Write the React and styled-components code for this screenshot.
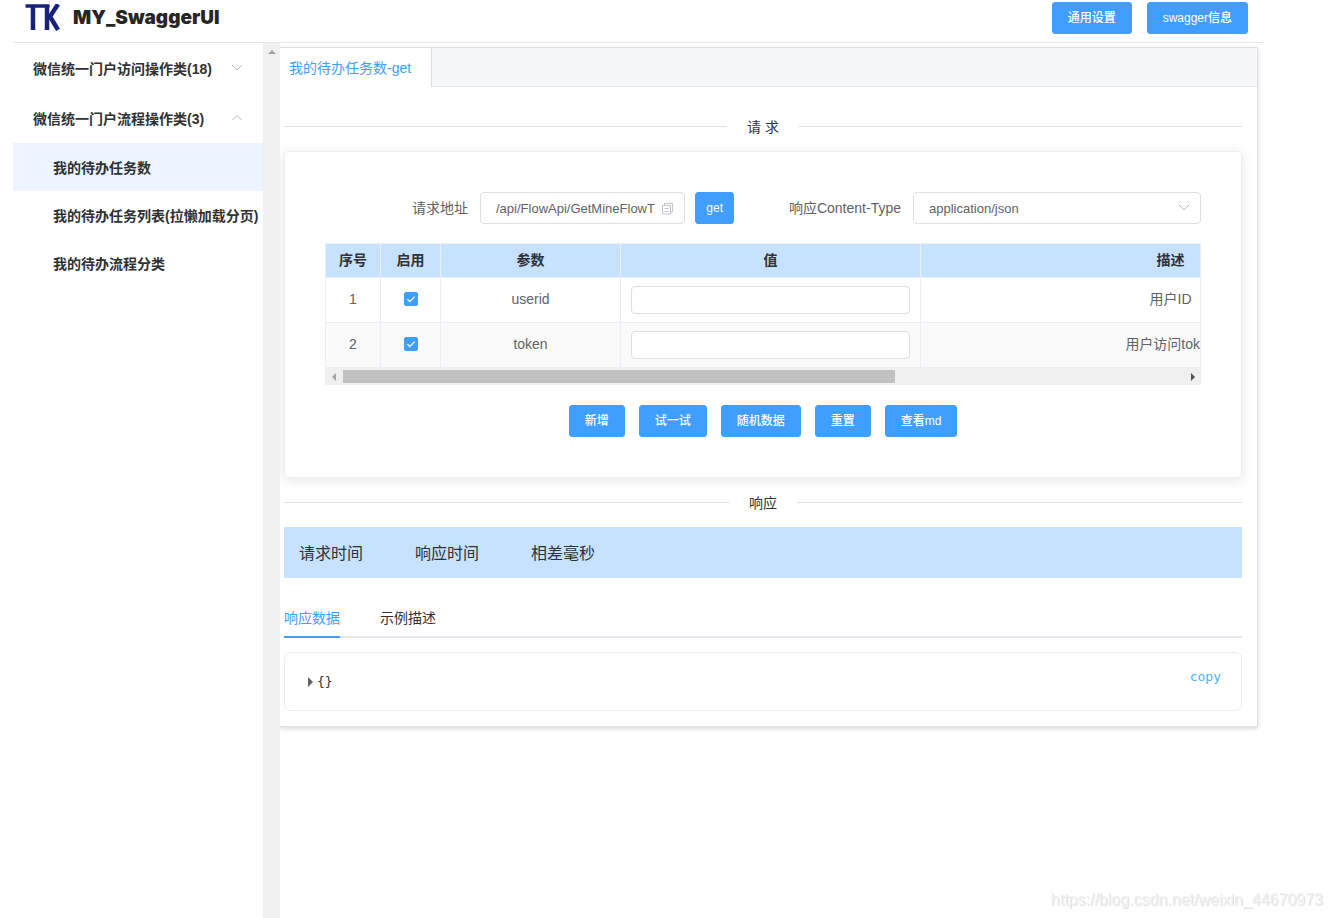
import { useState } from "react";
import styled, { createGlobalStyle, css } from "styled-components";

const GlobalStyle = createGlobalStyle`
  * {
    box-sizing: border-box;
  }

  body {
    margin: 0;
    background-color: white;
    color: #303133;
    font-family: "Liberation Sans", "Noto Sans CJK SC", sans-serif;
    font-size: 14px;
    line-height: 20px;
  }

  button, input, select {
    font-family: inherit;
  }
`;

const Page = styled.div`
  display: flex;
  flex-direction: column;
  min-height: 100vh;
  padding: 0 69px 0 13px;
`;

const Header = styled.header`
  display: flex;
  align-items: center;
  height: 43px;
  padding: 0 15px 6px 12px;
  border-bottom: 1px solid #e4e4e4;
`;

const Title = styled.h1`
  flex: 1;
  margin: 0 0 0 11px;
  color: #262626;
  font-family: Inter, sans-serif;
  font-size: 19px;
  font-weight: 900;
`;

const Button = styled.button`
  height: 32px;
  padding: 0 15px;
  border: 1px solid #409eff;
  border-radius: 3px;
  background-color: #409eff;
  color: white;
  font-size: 12px;
  font-weight: 500;
  line-height: 16px;
  white-space: nowrap;
  cursor: pointer;
`;

const HeaderButtons = styled.div`
  display: flex;
  gap: 15px;
`;

const Body = styled.div`
  display: flex;
  flex: 1;
`;

const Sidebar = styled.nav`
  width: 250px;
  flex-shrink: 0;
`;

const GroupButton = styled.button`
  display: flex;
  align-items: center;
  justify-content: space-between;
  width: 100%;
  height: 50px;
  padding: 0 20px;
  border: none;
  background: none;
  color: #303133;
  font-size: 14px;
  font-weight: 700;
  cursor: pointer;
`;

const MenuLink = styled.a`
  display: flex;
  align-items: center;
  height: 48px;
  padding: 2px 0 0 40px;
  background-color: ${({ $active }) => ($active ? "#ecf5ff" : "transparent")};
  color: #303133;
  font-weight: 700;
  text-decoration: none;
  white-space: nowrap;
`;

const SideTrack = styled.div`
  display: flex;
  justify-content: center;
  width: 17px;
  flex-shrink: 0;
  padding-top: 7px;
  background-color: #f0f0f0;
`;

const Main = styled.main`
  flex: 1;
  min-width: 0;
  padding: 4px 5px 8px 0;
  overflow: hidden;
`;

const Panel = styled.section`
  border: 1px solid #dcdfe6;
  border-left: none;
  box-shadow: 0 2px 4px rgba(0, 0, 0, 0.12), 0 0 6px rgba(0, 0, 0, 0.04);
`;

const TabStrip = styled.div`
  height: 39px;
  border-bottom: 1px solid #e4e7ed;
  background-color: #f5f7fa;
`;

const PageTab = styled.button`
  height: 39px;
  padding: 0 20px 2px 9px;
  border: none;
  border-right: 1px solid #dcdfe6;
  background-color: white;
  color: #409eff;
  font-size: 14px;
`;

const Content = styled.div`
  padding: 29px 15px 15px 4px;
`;

const Divider = styled.div`
  display: flex;
  align-items: center;
  gap: 20px;
  height: 20px;

  &::before, &::after {
    content: "";
    flex: 1;
    height: 1px;
    background-color: #dcdfe6;
  }

  span {
    padding-top: 2px;
  }
`;

const Card = styled.div`
  margin: 15px 0 14px;
  padding: 40px;
  border: 1px solid #ebeef5;
  border-radius: 4px;
  box-shadow: 0 2px 12px rgba(0, 0, 0, 0.1);
`;

const FormRow = styled.form`
  display: grid;
  grid-template-columns: 155px minmax(0, 1fr) 179px 288px;
  align-items: center;
  margin-bottom: 19px;
`;

const Label = styled.label`
  padding-right: 12px;
  color: #606266;
  text-align: right;
`;

const AddressField = styled.div`
  display: flex;
  gap: 10px;
`;

const fieldBox = css`
  border: 1px solid #dcdfe6;
  border-radius: 4px;
  background-color: white;
`;

const AddressBox = styled.div`
  ${fieldBox}
  display: flex;
  align-items: center;
  flex: 1;
  min-width: 0;
  height: 32px;
  padding: 0 10px 0 15px;
`;

const AddressInput = styled.input`
  flex: 1;
  min-width: 0;
  padding: 0;
  border: none;
  outline: none;
  color: #606266;
  font-size: 13px;
`;

const IconButton = styled.button`
  display: flex;
  margin-left: 6px;
  padding: 0;
  border: none;
  background: none;
  cursor: pointer;
`;

const MethodButton = styled(Button)`
  padding: 0 10px;
`;

const SelectBox = styled.div`
  ${fieldBox}
  display: grid;
  align-items: center;
  height: 32px;

  > * {
    grid-area: 1 / 1;
  }

  svg {
    justify-self: end;
    margin-right: 10px;
    pointer-events: none;
  }
`;

const Select = styled.select`
  width: 100%;
  height: 30px;
  padding: 0 30px 0 15px;
  border: none;
  outline: none;
  appearance: none;
  background: none;
  color: #606266;
  font-size: 13px;
`;

const TableBox = styled.div`
  border: 1px solid #ebeef5;
`;

const TableScroll = styled.div`
  overflow: hidden;
`;

const Table = styled.table`
  width: 1095px;
  border-collapse: separate;
  border-spacing: 0;
  table-layout: fixed;
  color: #606266;
  text-align: center;

  th, td {
    padding: 0 10px 2px;
    border-right: 1px solid #ebeef5;
    border-bottom: 1px solid #ebeef5;
  }

  th {
    height: 34px;
    background-color: #c6e2ff;
    color: #303133;
    font-weight: 700;
  }

  td {
    height: 45px;
  }

  tbody tr:nth-child(even) {
    background-color: #fafafa;
  }
`;

const Col = styled.col`
  width: ${({ $width }) => $width}px;
`;

const ValueCell = styled.td`
  && {
    padding-bottom: 0;
  }
`;

const CheckInput = styled.input`
  display: block;
  width: 14px;
  height: 14px;
  margin: 0 auto;
  border-radius: 2px;
  appearance: none;
  border: 1px solid #dcdfe6;
  background-color: white;

  &:checked {
    border-color: #409eff;
    background-color: #409eff;
    background-image: url("data:image/svg+xml,%3Csvg xmlns='http://www.w3.org/2000/svg' viewBox='0 0 12 12'%3E%3Cpath d='M2.4 6.2l2.4 2.4 4.8-5' fill='none' stroke='white' stroke-width='1.2'/%3E%3C/svg%3E");
  }
`;

const ValueInput = styled.input`
  ${fieldBox}
  display: block;
  width: 100%;
  height: 28px;
  padding: 0 15px;
  outline: none;
  color: #606266;
  font-size: 13px;
`;

const ScrollTrack = styled.div`
  display: flex;
  align-items: center;
  height: 16px;
  padding: 1px 5px 0 6px;
  background-color: #f0f0f0;
`;

const ScrollRail = styled.div`
  flex: 1;
  margin: 0 6px 0 7px;
`;

const ScrollThumb = styled.div`
  width: 65.5%;
  height: 13px;
  background-color: #c1c1c1;
`;

const Triangle = styled.span`
  width: 0;
  height: 0;
  border: ${({ $size = 4 }) => $size}px solid transparent;
  ${({ $dir, $color }) => ({
    up: `border-top: none; border-bottom-color: ${$color};`,
    left: `border-left: none; border-right-color: ${$color};`,
    right: `border-right: none; border-left-color: ${$color};`,
  })[$dir]}
`;

const Actions = styled.div`
  display: flex;
  justify-content: center;
  gap: 14px;
  margin-top: 20px;
`;

const TimeBar = styled.div`
  display: flex;
  gap: 52px;
  margin-top: 15px;
  padding: 15px 15px 12px;
  background-color: #c6e2ff;
  font-size: 16px;
  line-height: 24px;
`;

const ResultTabs = styled.div`
  display: flex;
  gap: 40px;
  height: 40px;
  margin-top: 20px;
  border-bottom: 2px solid #e4e7ed;
`;

const ResultTab = styled.button`
  height: 40px;
  padding: 0;
  border: none;
  border-bottom: 2px solid ${({ $active }) => ($active ? "#409eff" : "transparent")};
  background: none;
  color: ${({ $active }) => ($active ? "#409eff" : "#303133")};
  font-size: 14px;
  cursor: pointer;
`;

const JsonBox = styled.div`
  display: flex;
  justify-content: space-between;
  height: 59px;
  margin-top: 14px;
  padding: 14px 20px 14px 23px;
  border: 1px solid #eee;
  border-radius: 6px;
  font-family: "DejaVu Sans Mono", monospace;
  font-size: 13px;
`;

const JsonToggle = styled.button`
  display: flex;
  align-items: center;
  gap: 4px;
  padding: 0;
  border: none;
  background: none;
  color: #303133;
  font-size: 13px;
`;

const CopyButton = styled.button`
  align-self: flex-start;
  padding: 0;
  border: none;
  background: none;
  color: #49b3ff;
  font-size: 13px;
  line-height: 20px;
  cursor: pointer;
`;

const Watermark = styled.div`
  position: fixed;
  right: 9px;
  bottom: 8px;
  color: #f0f0f0;
  font-size: 16px;
  text-shadow: 1px 1px 1px #ddd;
`;

const Logo = () => (
  <svg width="37" height="28" viewBox="0 0 37 28" aria-label="TK" role="img">
    <g fill="none" stroke="#16227c" strokeWidth="4.500">
      <line x1="0.500" y1="2" x2="24.500" y2="2" strokeWidth="3.500" />
      <line x1="8" y1="1" x2="8" y2="26" />
      <line x1="22" y1="1" x2="22" y2="26" />
      <polyline points="33,0.200 25,12.500 33,25.800" />
    </g>
  </svg>
);

const Chevron = ({ up }) => (
  <svg width="12" height="12" viewBox="0 0 12 12" aria-hidden="true">
    <path
      d={up ? "M1.5 8L6 3.5L10.5 8" : "M1 3L6 8L11 3"}
      fill="none"
      stroke="#b4b8bf"
      strokeWidth="1"
    />
  </svg>
);

const CopyIcon = () => (
  <svg width="13" height="13" viewBox="0 0 13 13" aria-hidden="true">
    <path
      d="M3.5 3V1.5h8v8.500H10M1.500 3.5h8v8.500h-8zM3.500 6.500h4M3.500 9.500h4"
      fill="none"
      stroke="#c0c4cc"
    />
  </svg>
);

const groups = [
  { name: "微信统一门户访问操作类(18)", items: [] },
  {
    name: "微信统一门户流程操作类(3)",
    items: ["我的待办任务数", "我的待办任务列表(拉懒加载分页)", "我的待办流程分类"],
  },
];

const params = [
  { name: "userid", desc: "用户ID" },
  { name: "token", desc: "用户访问token" },
];

const actions = ["新增", "试一试", "随机数据", "重置", "查看md"];

const App = () => {
  const [openGroup, setOpenGroup] = useState(1);
  const [activeItem, setActiveItem] = useState("我的待办任务数");
  const [resultTab, setResultTab] = useState("响应数据");

  return (
    <>
      <GlobalStyle />
      <Page>
        <Header>
          <Logo />
          <Title>MY_SwaggerUI</Title>
          <HeaderButtons>
            <Button type="button">通用设置</Button>
            <Button type="button">swagger信息</Button>
          </HeaderButtons>
        </Header>
        <Body>
          <Sidebar>
            {groups.map((group, i) => (
              <div key={group.name}>
                <GroupButton type="button" onClick={() => setOpenGroup(i)}>
                  {group.name}
                  <Chevron up={openGroup === i} />
                </GroupButton>
                {openGroup === i && group.items.map((item) => (
                  <MenuLink
                    key={item}
                    href="#"
                    $active={item === activeItem}
                    onClick={() => setActiveItem(item)}
                  >
                    {item}
                  </MenuLink>
                ))}
              </div>
            ))}
          </Sidebar>
          <SideTrack>
            <Triangle $dir="up" $color="#a3a3a3" />
          </SideTrack>
          <Main>
            <Panel>
              <TabStrip>
                <PageTab type="button">我的待办任务数-get</PageTab>
              </TabStrip>
              <Content>
                <Divider><span>请 求</span></Divider>
                <Card>
                  <FormRow onSubmit={(e) => e.preventDefault()}>
                    <Label htmlFor="address">请求地址</Label>
                    <AddressField>
                      <AddressBox>
                        <AddressInput id="address" readOnly value="/api/FlowApi/GetMineFlowT" />
                        <IconButton type="button" aria-label="复制"><CopyIcon /></IconButton>
                      </AddressBox>
                      <MethodButton type="button">get</MethodButton>
                    </AddressField>
                    <Label htmlFor="contentType">响应Content-Type</Label>
                    <SelectBox>
                      <Select id="contentType">
                        <option>application/json</option>
                      </Select>
                      <Chevron />
                    </SelectBox>
                  </FormRow>
                  <TableBox>
                    <TableScroll>
                      <Table>
                        <colgroup>
                          <Col $width={55} />
                          <Col $width={60} />
                          <Col $width={180} />
                          <Col $width={300} />
                          <Col $width={500} />
                        </colgroup>
                        <thead>
                          <tr>
                            <th>序号</th>
                            <th>启用</th>
                            <th>参数</th>
                            <th>值</th>
                            <th>描述</th>
                          </tr>
                        </thead>
                        <tbody>
                          {params.map((param, i) => (
                            <tr key={param.name}>
                              <td>{i + 1}</td>
                              <td>
                                <CheckInput type="checkbox" defaultChecked aria-label={`启用 ${param.name}`} />
                              </td>
                              <td>{param.name}</td>
                              <ValueCell><ValueInput type="text" aria-label={param.name} /></ValueCell>
                              <td>{param.desc}</td>
                            </tr>
                          ))}
                        </tbody>
                      </Table>
                    </TableScroll>
                    <ScrollTrack>
                      <Triangle $dir="left" $color="#a3a3a3" />
                      <ScrollRail><ScrollThumb /></ScrollRail>
                      <Triangle $dir="right" $color="#505050" />
                    </ScrollTrack>
                  </TableBox>
                  <Actions>
                    {actions.map((name) => (
                      <Button key={name} type="button">{name}</Button>
                    ))}
                  </Actions>
                </Card>
                <Divider><span>响应</span></Divider>
                <TimeBar>
                  <span>请求时间</span>
                  <span>响应时间</span>
                  <span>相差毫秒</span>
                </TimeBar>
                <ResultTabs>
                  {["响应数据", "示例描述"].map((name) => (
                    <ResultTab
                      key={name}
                      type="button"
                      $active={name === resultTab}
                      onClick={() => setResultTab(name)}
                    >
                      {name}
                    </ResultTab>
                  ))}
                </ResultTabs>
                <JsonBox>
                  <JsonToggle type="button">
                    <Triangle $dir="right" $color="#606266" $size={5} />
                    {"{}"}
                  </JsonToggle>
                  <CopyButton type="button">copy</CopyButton>
                </JsonBox>
              </Content>
            </Panel>
          </Main>
        </Body>
      </Page>
      <Watermark>https://blog.csdn.net/weixin_44670973</Watermark>
    </>
  );
};

export default App;
